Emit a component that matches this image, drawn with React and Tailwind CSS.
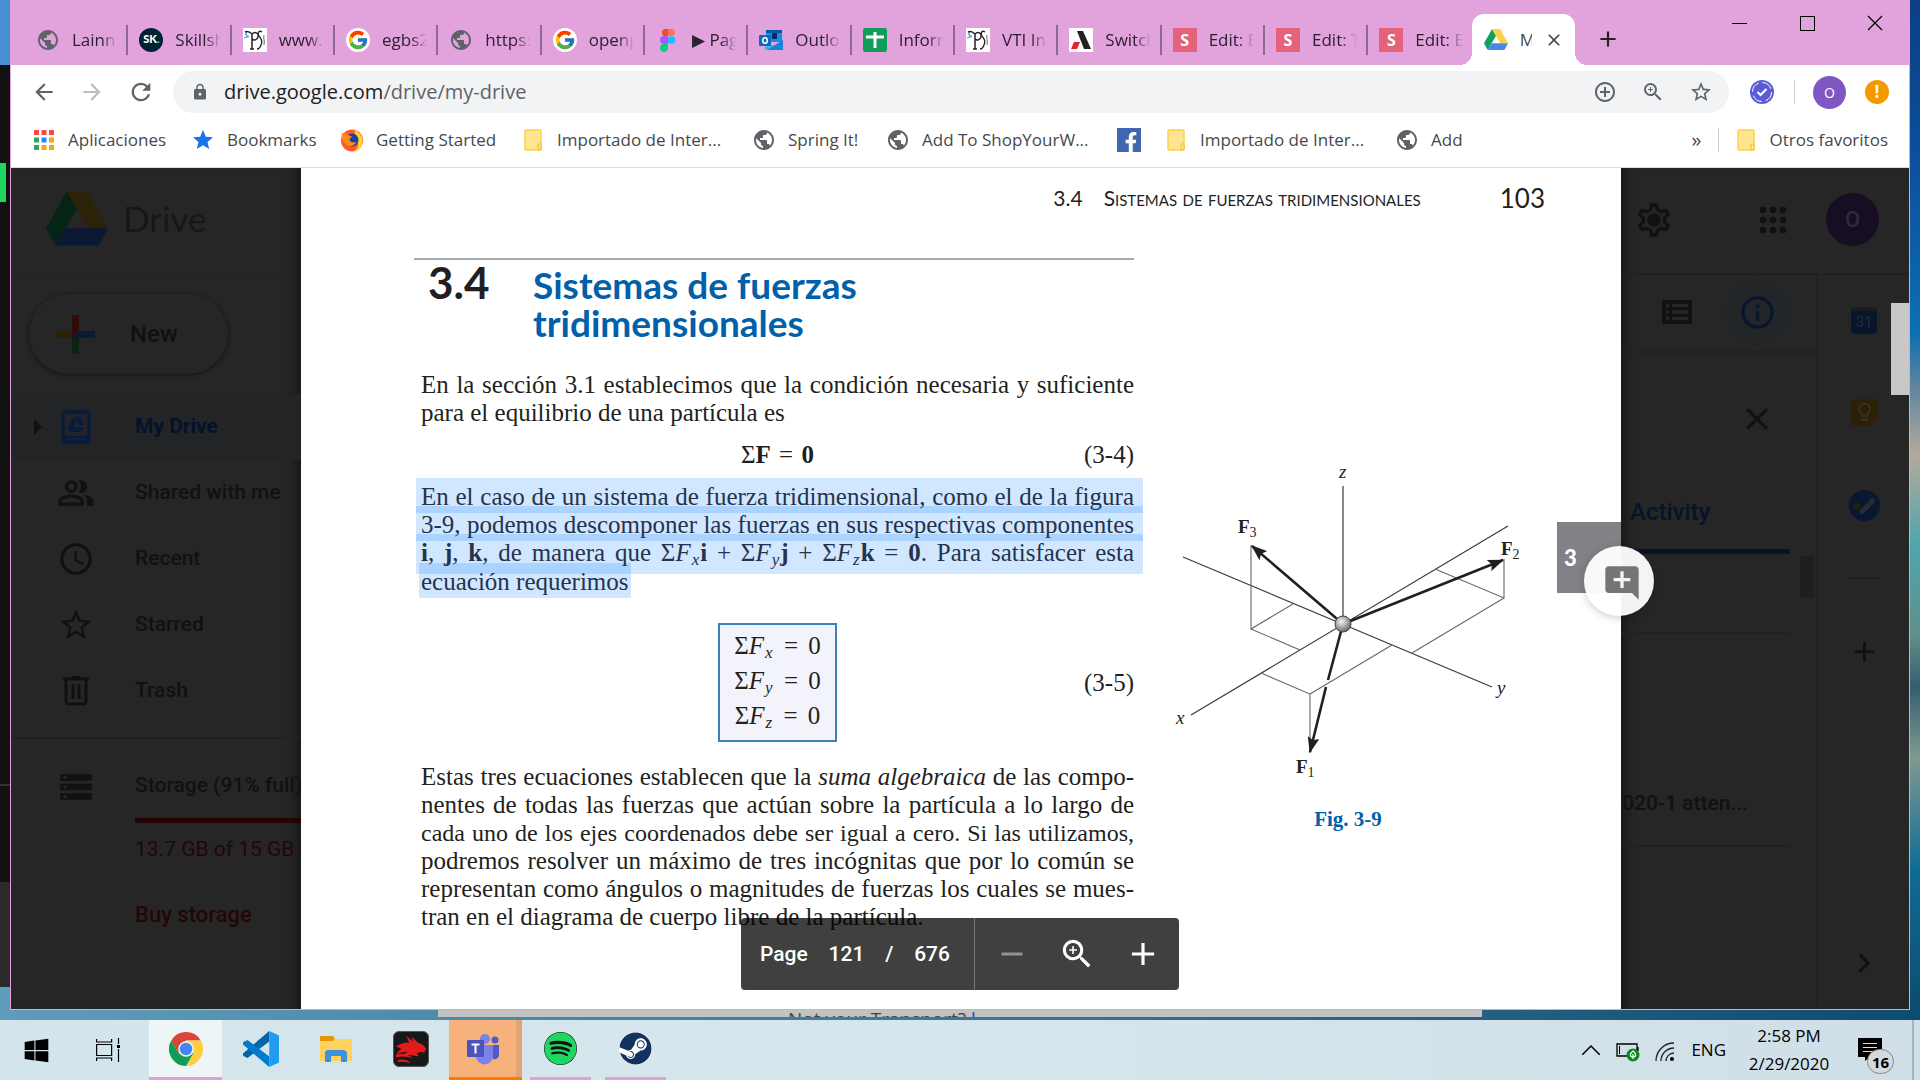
import React from "react";
import {
  MdArrowBack,
  MdArrowForward,
  MdRefresh,
  MdLock,
  MdAddCircleOutline,
  MdZoomIn,
  MdStarBorder,
  MdStar,
  MdClose,
  MdAdd,
  MdRemove,
  MdPublic,
  MdAddComment,
  MdAccessTime,
  MdStorage,
  MdOutlinePeopleAlt,
  MdOutlineSettings,
  MdOutlineInfo,
  MdChevronRight,
} from "react-icons/md";
import { FaWindows, FaSpotify, FaSteam, FaDragon, FaFacebookF } from "react-icons/fa";
import { FcGoogle } from "react-icons/fc";

/* ---------- icons ---------- */

const DriveLogo = ({ className, green = "#11a15e", yellow = "#ffcf44", blue = "#4687f4" }) => (
  <svg viewBox="137 95 187 163" className={className} aria-hidden="true">
    <path d="M200 95L231 148L166 258L137 206Z" fill={green} />
    <path d="M200 95H263L324 206H264Z" fill={yellow} />
    <path d="M198 206H324L296 258H166Z" fill={blue} />
  </svg>
);

const Globe = () => <MdPublic className="size-6 text-[#5f6368]" />;

const Skillshare = () => (
  <span className="flex size-6 items-center justify-center rounded-full bg-[#002333] font-['Lato'] text-[11px] font-black text-white">
    SK<span className="text-[#00ff84]">.</span>
  </span>
);

const PsIcon = () => (
  <svg viewBox="0 0 24 24" className="size-6" aria-hidden="true">
    <rect width="24" height="24" fill="#fff" />
    <path d="M2 6l4 3M1 10l5-2M3 4l1 6" stroke="#5fa8cf" strokeWidth="1.2" />
    <path d="M9 21V6c3-3 7-1 6 3-1 3-4 4-6 2M7 21h4M2 4c2-1 5 0 7 2" stroke="#222" strokeWidth="1.5" fill="none" />
    <path d="M19 4c-3-2-5 1-3 4 2 3 4 5 2 9-1 3-2 4-4 4" stroke="#222" strokeWidth="1.3" fill="none" />
    <path d="M21 7c-1 3 1 6 0 10" stroke="#666" fill="none" />
  </svg>
);

const Google = () => (
  <span className="flex size-6 items-center justify-center rounded-full bg-white">
    <FcGoogle className="size-[22px]" />
  </span>
);

const Figma = () => (
  <svg viewBox="0 0 24 24" className="size-6" aria-hidden="true">
    <path d="M12 1H8a4 4 0 0 0 0 7h4z" fill="#f24e1e" />
    <path d="M12 1h3.500a3.500 3.500 0 0 1 0 7H12z" fill="#ff7262" />
    <path d="M12 8H8a4 4 0 0 0 0 8h4z" fill="#a259ff" />
    <circle cx="15.500" cy="12" r="3.800" fill="#1abcfe" />
    <path d="M12 16H8a4 4 0 1 0 4 4z" fill="#0acf83" />
  </svg>
);

const Outlook = () => (
  <svg viewBox="0 0 24 24" className="size-6" aria-hidden="true">
    <rect x="7" y="2" width="16" height="12" fill="#1490df" />
    <rect x="7" y="2" width="16" height="3" fill="#0358a7" />
    <rect x="13" y="5" width="5" height="6" fill="#0a2767" />
    <path d="M6 13l9 5 9-6v10H6z" fill="#35b8f1" />
    <path d="M24 12v10H8z" fill="#1784d9" />
    <rect x="0" y="7" width="12" height="11" rx="1" fill="#0f6cbd" />
    <ellipse cx="6" cy="12.500" rx="2.300" ry="2.800" stroke="#fff" strokeWidth="1.600" fill="none" />
  </svg>
);

const Sheets = () => (
  <svg viewBox="0 0 24 24" className="size-6" aria-hidden="true">
    <rect width="24" height="24" rx="2" fill="#0f9d58" />
    <path d="M3 9h18M12 4v16" stroke="#fff" strokeWidth="3" />
  </svg>
);

const Adonis = () => (
  <svg viewBox="0 0 24 24" className="size-6" aria-hidden="true">
    <rect width="24" height="24" fill="#fff" />
    <path d="M8 3h6l8 18h-7z" fill="#222" />
    <path d="M5 14h6l-3 7H2z" fill="#e8202a" />
  </svg>
);

const SIcon = () => (
  <span className="flex size-6 items-center justify-center bg-[#e5637a] font-['Open_Sans'] text-[16px] font-bold text-white">
    S
  </span>
);

const DriveTab = () => <DriveLogo className="h-[21px] w-6 shrink-0" />;

const AppsIcon = () => (
  <svg viewBox="0 0 20 20" className="size-5" aria-hidden="true">
    {["#f44", "#f44", "#f44", "#35a163", "#1a8cff", "#f5a70b", "#35a163", "#f5a70b", "#f5a70b"].map((fill, i) => (
      <rect key={i} x={(i % 3) * 7.500} y={Math.floor(i / 3) * 7.500} width="5" height="5" fill={fill} />
    ))}
  </svg>
);

const Firefox = () => (
  <svg viewBox="0 0 24 24" className="size-6" aria-hidden="true">
    <circle cx="12" cy="12.500" r="11" fill="#ff5a24" />
    <path d="M15 0c0 3 6 5 7 10 2 6-2 13-9 13.500 6-3 6-8 4-12-1-3-3-7-2-11.500z" fill="#ffd52e" />
    <circle cx="12" cy="12" r="6.500" fill="#1c3fa0" />
    <path d="M2 5c2 0 4 0 5 2 3 0 4 1 5 2-2 1-3 2-2 4 2 2 4 1 6 1-1 4-6 5-9 3-4-2-6-7-5-12z" fill="#ff8a16" />
  </svg>
);

const Folder = () => (
  <svg viewBox="0 0 18 22" className="h-[22px] w-[18px]" aria-hidden="true">
    <rect x="1" y="1" width="16" height="20" rx="1" fill="#ffe58f" stroke="#fbd24b" strokeWidth="1.500" />
    <path d="M14 21v-6h3v6z" fill="#ffe58f" stroke="#ecc130" />
  </svg>
);

const Facebook = () => (
  <span className="flex size-6 items-end justify-center bg-[#4167b2] pl-1">
    <FaFacebookF className="size-5 text-white" />
  </span>
);

const Chrome = () => (
  <svg viewBox="0 0 48 48" className="size-[34px]" aria-hidden="true">
    <path d="M3.200 12A24 24 0 0 1 44.800 12H24L13.600 30Z" fill="#db4437" />
    <path d="M44.800 12A24 24 0 0 1 24 48L34.400 30L24 12Z" fill="#ffcd40" />
    <path d="M24 48A24 24 0 0 1 3.200 12L13.600 30H34.400Z" fill="#0f9d58" />
    <circle cx="24" cy="24" r="11" fill="#f1f1f1" />
    <circle cx="24" cy="24" r="8.800" fill="#4285f4" />
  </svg>
);

const VsCode = () => (
  <svg viewBox="0 0 24 24" className="size-9" aria-hidden="true">
    <path d="M17.500 0V7L3 18L0 16.500V15Z" fill="#0065a9" />
    <path d="M17.500 24V17L3 6L0 7.500V9Z" fill="#007acc" />
    <path d="M17.500 0L24 3V21L17.500 24Z" fill="#1f9cf0" />
  </svg>
);

const Explorer = () => (
  <svg viewBox="0 0 32 26" className="h-[26px] w-8" aria-hidden="true">
    <path d="M0 0h13l2 3-2 2H0z" fill="#dc9a09" />
    <path d="M0 5h13l2-2h17v22H0z" fill="#ffd25e" />
    <path d="M5 26V16l2-2h17l3 2v10h-6v-6H11v6z" fill="#3b95dd" />
  </svg>
);

const Dragon = () => (
  <span className="flex size-9 items-center justify-center rounded-md border border-[#555] bg-[#17181a]">
    <svg viewBox="0 0 36 36" className="size-9" fill="#e31b1b" aria-hidden="true">
      <path d="M2 15c6-3 9-4 14-4l-3-7 7 6-1-5 6 6c4 1 7 3 9 7l-2 4-4-1-4 2 3 3-7-1c-5-1-8 0-12 1 2-3 5-4 7-5-5 0-9 1-13 3 2-3 4-5 6-6z" />
      <path d="M2 24c6-2 13-1 18 4-5-2-12-3-18-1zM4 30c5-2 10-1 14 3-5-1-9-2-14-1z" />
    </svg>
  </span>
);

const Teams = () => (
  <svg viewBox="0 0 34 32" className="h-8 w-[34px]" aria-hidden="true">
    <circle cx="19" cy="6" r="5" fill="#7b83eb" />
    <circle cx="29" cy="7" r="3.500" fill="#5059c9" />
    <path d="M24 12h9v10c0 3-3 5-6 4z" fill="#5059c9" />
    <path d="M10 12h17v11a8 8 0 0 1-17 0z" fill="#7b83eb" />
    <rect x="1" y="7" width="17" height="17" rx="1" fill="#4b53bc" />
    <path d="M5.500 11.500h8M9.500 11.500v9" stroke="#fff" strokeWidth="2" />
  </svg>
);

const Spotify = () => (
  <span className="flex size-[33px] items-center justify-center rounded-full bg-[#111]">
    <FaSpotify className="size-[33px] text-[#1ed760]" />
  </span>
);

const Steam = () => (
  <span className="flex size-[33px] items-center justify-center rounded-full bg-white">
    <FaSteam className="size-[33px] text-[#12335f]" />
  </span>
);

const TaskView = () => (
  <svg viewBox="0 0 24 24" className="size-6" fill="none" stroke="#000" strokeWidth="1.200" aria-hidden="true">
    <path d="M.6 1v3h15V1M.6 23v-3h15v3M.6 6.500h15v11H.6zM22.500 0v6M22.500 11v13" />
    <rect x="21" y="7" width="3" height="3" fill="#000" stroke="none" />
  </svg>
);

const MyDriveIcon = () => (
  <svg viewBox="0 0 30 34" className="h-[34px] w-[30px]" aria-hidden="true">
    <rect x="2" y="2" width="26" height="30" rx="2" fill="none" stroke="#081a3d" strokeWidth="3.500" />
    <path d="M2 26h26v5H2z" fill="#081a3d" />
    <path d="M5 29h20" stroke="#26292e" />
    <path d="M12.500 7l3 5-6 10-2.500-4zM14 7h5l4 8h-5zM13 17h10l-2.500 5H11z" fill="#081a3d" />
  </svg>
);

const TrashIcon = () => (
  <svg viewBox="0 0 26 30" className="h-[30px] w-[26px]" fill="none" stroke="#0f1011" strokeWidth="3" aria-hidden="true">
    <path d="M0 3h26M9 1h8M3 3v22a3 3 0 0 0 3 3h14a3 3 0 0 0 3-3V3M10 8v15M16 8v15" />
  </svg>
);

const ListIcon = () => (
  <svg viewBox="0 0 30 24" className="h-6 w-[30px]" aria-hidden="true">
    <rect width="30" height="24" fill="#111213" />
    <path d="M4 5.500h3M4 12h3M4 18.500h3M10 5.500h16M10 12h16M10 18.500h16" stroke="#262626" strokeWidth="3" />
  </svg>
);

/* ---------- browser chrome ---------- */

const tabs = [
  { icon: Globe, title: "Lainnya" },
  { icon: Skillshare, title: "Skillshare" },
  { icon: PsIcon, title: "www.vti" },
  { icon: Google, title: "egbs2020" },
  { icon: Globe, title: "https://" },
  { icon: Google, title: "openproject" },
  { icon: Figma, title: "▶ Page" },
  { icon: Outlook, title: "Outlook" },
  { icon: Sheets, title: "Informe" },
  { icon: PsIcon, title: "VTI Inicio" },
  { icon: Adonis, title: "Switch" },
  { icon: SIcon, title: "Edit: E" },
  { icon: SIcon, title: "Edit: T" },
  { icon: SIcon, title: "Edit: E" },
];

const Tab = ({ icon: Icon, title, last }) => (
  <button
    className={`flex h-[30px] min-w-0 items-center gap-3 pl-[11px] pr-[9px] text-left ${last ? "" : "border-r-2 border-[#8f6a8c]"}`}
  >
    <span className="flex size-6 shrink-0 items-center justify-center">
      <Icon />
    </span>
    <span className="min-w-0 flex-1 overflow-hidden whitespace-nowrap [mask-image:linear-gradient(to_right,#000_65%,transparent)]">
      {title}
    </span>
  </button>
);

const TabStrip = () => (
  <div className="flex h-[65px] bg-[#e2a3dc] pl-[14px] text-[17px] text-[#2b2230]">
    <div className="mt-[14px] grid min-w-0 flex-1 grid-cols-15 items-center">
      {tabs.map((tab, i) => (
        <Tab key={i} {...tab} last={i === tabs.length - 1} />
      ))}
      <div className="relative flex h-[51px] min-w-0 items-center gap-3 rounded-t-xl bg-white pl-3 pr-4 text-[#45494d]">
        <span className="absolute -left-3 bottom-0 size-3 bg-[radial-gradient(circle_at_0_0,transparent_12px,#fff_12px)]" />
        <span className="absolute -right-3 bottom-0 size-3 bg-[radial-gradient(circle_at_100%_0,transparent_12px,#fff_12px)]" />
        <DriveTab />
        <span className="w-3 shrink-0 overflow-hidden whitespace-nowrap">Mi unidad</span>
        <button aria-label="Close tab" className="ml-auto">
          <MdClose className="size-5" />
        </button>
      </div>
    </div>
    <div className="flex w-[334px] justify-between">
      <button aria-label="New tab" className="flex h-[78px] items-center pl-5">
        <MdAdd className="size-[26px] text-[#222]" />
      </button>
      <div className="flex h-[46px]">
        <button aria-label="Minimize" className="flex w-[68px] items-center justify-center">
          <span className="h-px w-[15px] bg-black" />
        </button>
        <button aria-label="Maximize" className="flex w-[68px] items-center justify-center">
          <span className="size-[15px] border border-black" />
        </button>
        <button aria-label="Close" className="flex w-[68px] items-center justify-center">
          <svg viewBox="0 0 16 16" className="size-4" stroke="#000" strokeWidth="1.200">
            <path d="M1 1l14 14M15 1L1 15" />
          </svg>
        </button>
      </div>
    </div>
  </div>
);

const Toolbar = () => (
  <div className="flex h-[54px] items-center bg-white pl-5 pr-5 text-[#5f6368]">
    <button aria-label="Back" className="w-12">
      <MdArrowBack className="size-[26px]" />
    </button>
    <button aria-label="Forward" className="w-12 text-[#bcbec0]">
      <MdArrowForward className="size-[26px]" />
    </button>
    <button aria-label="Reload" className="w-[46px]">
      <MdRefresh className="size-[28px]" />
    </button>
    <div className="flex h-[42px] flex-1 items-center rounded-full bg-[#f1f3f4] pl-[18px] pr-4">
      <MdLock className="size-[18px]" />
      <div className="ml-[15px] flex-1 text-[20px]">
        <span className="text-[#202124]">drive.google.com</span>/drive/my-drive
      </div>
      <div className="flex gap-6">
        <MdAddCircleOutline className="size-6" />
        <MdZoomIn className="size-6" />
        <MdStarBorder className="size-6" />
      </div>
    </div>
    <svg viewBox="0 0 24 24" className="ml-[21px] size-6" aria-hidden="true">
      <circle cx="12" cy="12" r="12" fill="#5c5bd6" />
      <circle cx="12" cy="12" r="9.500" fill="none" stroke="#fff" strokeDasharray="11 4" />
      <path d="M7.500 12l3 3 6-6" fill="none" stroke="#fff" strokeWidth="2" />
    </svg>
    <span className="ml-5 mr-[18px] h-6 w-px bg-[#cfd1d4]" />
    <span className="flex size-[33px] items-center justify-center rounded-full bg-[#7e57c2] text-[14px] text-white">O</span>
    <span className="ml-[19px] flex size-6 items-center justify-center rounded-full bg-[#f29900] text-[17px] font-bold text-white">
      !
    </span>
  </div>
);

const bookmarks = [
  { icon: AppsIcon, label: "Aplicaciones", width: "w-[159px]" },
  { icon: () => <MdStar className="size-6 text-[#1a73e8]" />, label: "Bookmarks", width: "w-[149px]" },
  { icon: Firefox, label: "Getting Started", width: "w-[181px]" },
  { icon: Folder, label: "Importado de Inter...", width: "w-[231px]" },
  { icon: Globe, label: "Spring It!", width: "w-[134px]" },
  { icon: Globe, label: "Add To ShopYourW...", width: "w-[231px]" },
  { icon: Facebook, label: "", width: "w-[47px]" },
  { icon: Folder, label: "Importado de Inter...", width: "w-[231px]" },
  { icon: Globe, label: "Add", width: "w-[80px]" },
];

const Bookmark = ({ icon: Icon, label, width }) => (
  <a href="#" className={`flex shrink-0 items-center gap-3 whitespace-nowrap ${width}`}>
    <span className="flex w-6 justify-center">
      <Icon />
    </span>
    {label}
  </a>
);

const BookmarksBar = () => (
  <div className="flex h-[49px] items-center border-b border-[#dadce0] bg-white pb-[6px] pl-[21px] pr-[21px] text-[17px] text-[#45494d]">
    {bookmarks.map((item, i) => (
      <Bookmark key={i} {...item} />
    ))}
    <span className="ml-auto mr-4 text-[20px]">»</span>
    <span className="mr-[15px] h-6 w-px bg-[#cfd1d4]" />
    <Bookmark icon={Folder} label="Otros favoritos" width="" />
  </div>
);

/* ---------- Drive, dimmed behind the viewer ---------- */

const navItems = [
  { icon: MdOutlinePeopleAlt, label: "Shared with me" },
  { icon: MdAccessTime, label: "Recent" },
  { icon: MdStarBorder, label: "Starred" },
  { icon: TrashIcon, label: "Trash" },
];

const Sidebar = () => (
  <aside className="w-[290px] shrink-0 overflow-hidden whitespace-nowrap bg-[#262626] font-['Roboto'] text-[21px] text-[#101112] shadow-[inset_-12px_0_12px_-8px_#161616]">
    <div className="flex h-[107px] items-center gap-[15px] border-b border-[#212121] pb-[5px] pl-[35px]">
      <DriveLogo className="h-[55px] w-[62px]" green="#052416" yellow="#2c220a" blue="#0b1833" />
      <span className="font-['Lato'] text-[35px] text-[#15171a]">Drive</span>
    </div>
    <button className="ml-[18px] mt-[19px] flex h-20 w-[199px] items-center gap-[35px] rounded-full pl-[27px] shadow-[0_1px_4px_#111]">
      <svg viewBox="0 0 39 39" className="size-[39px]" aria-hidden="true">
        <path d="M16 0h7v16l-7 7z" fill="#320c09" />
        <path d="M0 16h16v7H0z" fill="#2c2103" />
        <path d="M16 23h7v16h-7z" fill="#0b2411" />
        <path d="M23 16h16v7H16z" fill="#0b1a38" />
      </svg>
      <span className="text-[24px] font-medium">New</span>
    </button>
    <nav className="mt-5 font-medium">
      <a href="#" className="flex h-[66px] items-center bg-[#222426] pl-[23px] font-bold text-[#04122c]">
        <span className="mr-[19px] border-y-8 border-l-8 border-y-transparent border-l-[#101112]" />
        <MyDriveIcon />
        <span className="ml-11">My Drive</span>
      </a>
      {navItems.map(({ icon: Icon, label }) => (
        <a key={label} href="#" className="flex h-[66px] items-center gap-10 pl-[46px]">
          <span className="flex w-[38px] justify-center">
            {Icon === TrashIcon ? <Icon /> : <Icon className="size-[38px]" />}
          </span>
          {label}
        </a>
      ))}
    </nav>
    <div className="mt-[13px] flex gap-10 border-t-2 border-[#212121] pl-[46px] pt-[29px]">
      <MdStorage className="size-[38px] shrink-0" />
      <div className="flex flex-col">
        <span className="h-[50px] pt-0.5 font-medium">Storage (91% full)</span>
        <span className="h-[5px] w-[220px] bg-[#230303]" />
        <span className="mt-3 leading-[28px] text-[#230606]">13.7 GB of 15 GB used</span>
        <a href="#" className="mt-[38px] text-[22px] font-medium leading-[28px] text-[#230606]">Buy storage</a>
      </div>
    </div>
  </aside>
);

const DetailsPanel = () => (
  <aside className="relative flex w-[288px] shrink-0 flex-col bg-[#262626] font-['Roboto'] text-[21px] text-[#101112] shadow-[inset_12px_0_12px_-8px_#161616]">
    <div className="flex h-[107px] items-center border-b-2 border-[#202122] pb-0.5 pl-[15px]">
      <span className="relative flex size-9 items-center justify-center">
        <MdOutlineSettings className="size-10 shrink-0" />
        <span className="absolute size-3 rounded-full bg-[#101112]" />
      </span>
      <svg viewBox="0 0 28 28" className="ml-[87px] size-7" fill="#101112" aria-hidden="true">
        {[0, 1, 2, 3, 4, 5, 6, 7, 8].map((i) => (
          <circle key={i} cx={4 + (i % 3) * 10} cy={4 + Math.floor(i / 3) * 10} r="3.300" />
        ))}
      </svg>
      <span className="ml-[39px] flex size-[53px] items-center justify-center rounded-full bg-[#180e24] text-[22px] font-medium text-[#332b3b]">
        O
      </span>
    </div>
    <div className="flex flex-1">
      <div className="w-[197px] overflow-hidden border-r-2 border-[#202122]">
        <div className="flex h-[78px] items-center border-b-2 border-[#202122] pb-0.5 pl-[41px]">
          <ListIcon />
          <span className="ml-8 flex size-[66px] items-center justify-center rounded-full bg-[#232629]">
            <MdOutlineInfo className="size-[39px] text-[#07152e]" />
          </span>
        </div>
        <div className="flex h-[130px] items-center justify-end pr-10 pt-0.5">
          <MdClose className="size-[38px]" />
        </div>
        <div className="flex">
          <div className="w-[169px]">
            <div className="flex h-[71px] items-center border-b-[5px] border-[#0a1226] pb-2 pl-[9px] text-[24px] font-medium text-[#07132b]">
              Activity
            </div>
            <div className="h-[80px] border-b-2 border-[#202122]" />
          </div>
          <div className="ml-[10px] mt-[73px] h-[42px] w-[14px] bg-[#1f1f1f]" />
        </div>
        <div className="flex h-[213px] w-[169px] items-end justify-end whitespace-nowrap border-b-2 border-[#202122] pb-[26px] pr-[42px] font-medium">
          2020-1 atten...
        </div>
      </div>
      <div className="flex flex-1 flex-col items-center pl-px pt-[31px]">
        <span className="mt-px flex h-[27px] w-[26px] items-center justify-center rounded-sm border-t-4 border-[#1c1c1e] bg-[#08152e] text-[15px] text-[#242b38]">
          31
        </span>
        <svg viewBox="0 0 27 27" className="mt-[65px] size-[27px]" aria-hidden="true">
          <path d="M2 0h23l2 2v17l-8 8H2l-2-2V2z" fill="#2c2104" />
          <path d="M11 17c0-3-3-4-3-7a5.500 5.500 0 0 1 11 0c0 3-3 4-3 7zM11 19v2h5v-2" fill="none" stroke="#37362f" strokeWidth="1.500" />
        </svg>
        <svg viewBox="0 0 31 31" className="mt-[64px] size-[31px]" aria-hidden="true">
          <circle cx="15.500" cy="15.500" r="15.500" fill="#0a1730" />
          <circle cx="7.500" cy="16" r="3.300" fill="#2c2104" />
          <path d="M13 21.500L23.500 11" stroke="#262b34" strokeWidth="5" strokeLinecap="round" />
        </svg>
        <span className="mt-[56px] h-0.5 w-[33px] bg-[#1f1f1f]" />
        <MdAdd className="mt-[56px] size-[33px]" />
        <MdChevronRight className="mb-[27px] mt-auto size-[38px]" />
      </div>
    </div>
    <div className="absolute right-0 top-[135px] h-[92px] w-[18px] bg-[#c8c8c8]" />
  </aside>
);

/* ---------- PDF page ---------- */

const Sum = ({ axis }) => (
  <>
    Σ<i>F</i>
    <sub className="px-px text-[17px] italic">{axis}</sub>
  </>
);

const Line = ({ children, tight }) => (
  <span className={`block whitespace-nowrap [text-align-last:justify] ${tight ? "text-[24px]" : ""}`}>{children}</span>
);

const Figure = () => (
  <svg viewBox="1170 460 360 320" className="h-[320px] w-[360px]" role="img" aria-label="Fig. 3-9">
    <defs>
      <radialGradient id="ball" cx="40%" cy="35%" r="65%">
        <stop offset="0" stopColor="#f4f4f4" />
        <stop offset="1" stopColor="#6b6b6d" />
      </radialGradient>
      <marker id="arrow" viewBox="0 0 16 12" refX="15" refY="6" markerWidth="16" markerHeight="12" markerUnits="userSpaceOnUse" orient="auto">
        <path d="M0 0L16 6L0 12L3 6Z" fill="#231f20" />
      </marker>
    </defs>
    <g stroke="#3c3a3b" strokeWidth="1.200" fill="none">
      <path d="M1343 486V624M1508 526L1191 715M1183 557L1492 687" />
    </g>
    <g stroke="#666769" strokeWidth="1.100" fill="none">
      <path d="M1251 545V629L1293 604M1251 629L1300 650" />
      <path d="M1504 559V598L1435 569M1504 598L1412 653" />
      <path d="M1310 753V694L1261 673M1310 694L1392 645" />
    </g>
    <g stroke="#231f20" strokeWidth="2.600" fill="none">
      <path d="M1343 624L1252 546" markerEnd="url(#arrow)" />
      <path d="M1343 624L1503 560" markerEnd="url(#arrow)" />
      <path d="M1343 624L1328 680" />
      <path d="M1326 687L1310 752" markerEnd="url(#arrow)" />
    </g>
    <circle cx="1343" cy="624" r="8" fill="url(#ball)" stroke="#444" />
    <g fontFamily="Liberation Serif, serif" fontSize="19" fill="#231f20">
      <g fontStyle="italic">
        <text x="1339" y="478">z</text>
        <text x="1176" y="724">x</text>
        <text x="1497" y="694">y</text>
      </g>
      <g fontWeight="bold">
        <text x="1238" y="533">F<tspan dy="4" fontSize="14" fontWeight="normal">3</tspan></text>
        <text x="1501" y="555">F<tspan dy="4" fontSize="14" fontWeight="normal">2</tspan></text>
        <text x="1296" y="773">F<tspan dy="4" fontSize="14" fontWeight="normal">1</tspan></text>
      </g>
    </g>
  </svg>
);

const Page = () => (
  <main className="flex-1 bg-white text-[#231f20]">
    <div className="flex h-11 items-end justify-end pr-[76px] pt-4 font-['Lato'] leading-[28px]">
      <span className="text-[21px]">3.4</span>
      <span className="ml-[21px] text-[21px] [font-variant:small-caps]">Sistemas de fuerzas tridimensionales</span>
      <span className="ml-[79px] text-[26px]">103</span>
    </div>
    <div className="mt-[46px] flex pl-[113px]">
      <article className="w-[720px] border-t-2 border-[#a7a9ac] font-['Liberation_Serif'] text-[25px] leading-[28px]">
        <h1 className="flex items-baseline pl-[14px] pt-[3px] font-['Lato'] font-bold leading-[38px]">
          <span className="w-[105px] text-[44px]">3.4</span>
          <span className="text-[37px] text-[#0060a9]">
            Sistemas de fuerzas
            <br />
            tridimensionales
          </span>
        </h1>
        <div className="pl-[7px]">
          <p className="mt-[29px]">
            <Line>En la sección 3.1 establecimos que la condición necesaria y suficiente</Line>
            para el equilibrio de una partícula es
          </p>
          <div className="mt-[14px] grid grid-cols-[1fr_auto_1fr]">
            <span className="col-start-2">
              Σ<b>F</b> <span className="px-0.5">=</span> <b>0</b>
            </span>
            <span className="text-right">(3-4)</span>
          </div>
          <p className="-ml-[5px] -mr-[9px] mt-[9px] text-[#25334c]">
            <span className="-mb-[7px] block h-[35px] bg-[rgba(0,122,255,0.18)] pl-[5px] pr-[9px] pt-[5px]">
              <Line>En el caso de un sistema de fuerza tridimensional, como el de la figura</Line>
            </span>
            <span className="-mb-[7px] block h-[35px] bg-[rgba(0,122,255,0.18)] pl-[5px] pr-[9px] pt-[5px]">
              <Line>3-9, podemos descomponer las fuerzas en sus respectivas componentes</Line>
            </span>
            <span className="-mb-[11px] block h-[40px] bg-[rgba(0,122,255,0.18)] pl-[5px] pr-[9px] pt-[5px]">
              <Line>
                <b>i</b>, <b>j</b>, <b>k</b>, de manera que <Sum axis="x" />
                <b>i</b> + <Sum axis="y" />
                <b>j</b> + <Sum axis="z" />
                <b>k</b> = <b>0</b>. Para satisfacer esta
              </Line>
            </span>
            <span className="ml-[3px] block h-[35px] w-fit bg-[rgba(0,122,255,0.18)] pl-0.5 pr-0.5 pt-[5px]">
              ecuación requerimos
            </span>
          </p>
          <div className="mt-[25px] grid grid-cols-[1fr_auto_1fr] items-center">
            <div className="col-start-2 w-[119px] border-2 border-[#3b82bd] bg-[#f3f4fb] pb-[7px] pt-[3px] text-center leading-[35px]">
              {["x", "y", "z"].map((axis) => (
                <div key={axis}>
                  <Sum axis={axis} /> <span className="px-1">=</span> 0
                </div>
              ))}
            </div>
            <span className="text-right">(3-5)</span>
          </div>
          <p className="mt-[21px]">
            <Line>
              Estas tres ecuaciones establecen que la <i>suma algebraica</i> de las compo-
            </Line>
            <Line>nentes de todas las fuerzas que actúan sobre la partícula a lo largo de</Line>
            <Line tight>cada uno de los ejes coordenados debe ser igual a cero. Si las utilizamos,</Line>
            <Line>podremos resolver un máximo de tres incógnitas que por lo común se</Line>
            <Line>representan como ángulos o magnitudes de fuerzas los cuales se mues-</Line>
            tran en el diagrama de cuerpo libre de la partícula.
          </p>
        </div>
      </article>
      <figure className="ml-9 mt-[202px]">
        <Figure />
        <figcaption className="mt-[25px] pr-1 text-center font-['Liberation_Serif'] text-[21px] font-bold leading-[28px] text-[#0060a9]">
          Fig. 3-9
        </figcaption>
      </figure>
      <div className="ml-auto mt-[264px] flex h-[71px] w-[64px] items-center bg-[#808286] pl-[7px] font-['Lato'] text-[22px] font-black text-white">
        3
      </div>
    </div>
  </main>
);

const ViewerBar = () => (
  <div className="absolute bottom-[19px] left-1/2 flex h-[72px] w-[438px] -translate-x-1/2 items-center rounded bg-black/75 font-['Roboto'] text-[21px] font-medium text-white">
    <div className="flex h-full w-[234px] items-center justify-between border-r border-[#777] pl-[19px] pr-6 pt-0.5">
      <span>Page</span>
      <span>121</span>
      <span>/</span>
      <span>676</span>
    </div>
    <div className="flex flex-1 items-center justify-between pl-[19px] pr-[17px]">
      <button aria-label="Zoom out">
        <MdRemove className="size-[36px] text-[#929292]" />
      </button>
      <button aria-label="Fit to page">
        <MdZoomIn className="size-[38px]" />
      </button>
      <button aria-label="Zoom in">
        <MdAdd className="size-[38px]" />
      </button>
    </div>
  </div>
);

const Browser = () => (
  <div className="flex min-w-0 flex-1 flex-col border-x border-b border-[#e2a3dc]">
    <TabStrip />
    <Toolbar />
    <BookmarksBar />
    <div className="relative flex flex-1">
      <Sidebar />
      <Page />
      <DetailsPanel />
      <ViewerBar />
      <button
        aria-label="Add comment"
        className="absolute right-[255px] top-[378px] flex size-[70px] items-center justify-center rounded-full bg-white/95 shadow-[0_2px_8px_rgba(0,0,0,0.2)]"
      >
        <MdAddComment className="ml-[5px] mt-1 size-10 text-[#757575]" />
      </button>
    </div>
  </div>
);

/* ---------- taskbar ---------- */

const pinned = [
  { name: "Chrome", icon: Chrome, tile: "bg-white/60", bar: "w-[73px] bg-[#e2a0da]" },
  { name: "Visual Studio Code", icon: VsCode, tile: "", bar: "" },
  { name: "File Explorer", icon: Explorer, tile: "", bar: "" },
  { name: "Dragon Center", icon: Dragon, tile: "", bar: "" },
  { name: "Teams", icon: Teams, tile: "bg-[#f7b27c] border-r-[6px] border-[#e3a473]", bar: "w-[73px] bg-[#ff7a00]" },
  { name: "Spotify", icon: Spotify, tile: "", bar: "w-[61px] bg-[#e2a0da]" },
  { name: "Steam", icon: Steam, tile: "", bar: "w-[61px] bg-[#e2a0da]" },
];

const Taskbar = () => (
  <footer className="flex h-[60px] bg-linear-to-r from-[#d3e5ec] via-[#d7e6ed] to-[#d0dfe7] text-black">
    <button aria-label="Start" className="flex w-[72px] items-center justify-center">
      <FaWindows className="size-[27px]" />
    </button>
    <button aria-label="Task view" className="flex w-[72px] items-center justify-center">
      <TaskView />
    </button>
    <div className="ml-[5px] flex gap-0.5">
      {pinned.map(({ name, icon: Icon, tile, bar }) => (
        <button key={name} aria-label={name} className="flex w-[73px] flex-col items-center">
          <span className={`flex w-full flex-1 items-center justify-center ${tile}`}>
            <Icon />
          </span>
          <span className={`h-[3px] ${bar}`} />
        </button>
      ))}
    </div>
    <div className="ml-auto flex items-center text-[17px] leading-[28px]">
      <svg viewBox="0 0 18 10" className="h-[10px] w-[18px]" fill="none" stroke="#000" strokeWidth="1.500" aria-hidden="true">
        <path d="M0 10L9 1L18 10" />
      </svg>
      <svg viewBox="0 0 24 20" className="ml-4 mt-1 h-5 w-6" aria-hidden="true">
        <path d="M1 2h20v12H1zM22 5v4" fill="none" stroke="#000" strokeWidth="1.300" />
        <path d="M3 4h1v8H3z" />
        <circle cx="17" cy="13" r="6.500" fill="#0b8a1c" />
        <path d="M17 9c4 3 3 6 0 6s-4-3 0-6zM17 12v5" fill="none" stroke="#fff" strokeWidth="1.200" />
      </svg>
      <svg viewBox="0 0 20 20" className="ml-[15px] mt-1 size-5" fill="none" stroke="#222" strokeWidth="1.300" aria-hidden="true">
        <path d="M1 19A18 18 0 0 1 19 1M6 19A13 13 0 0 1 19 6M11 19a8 8 0 0 1 8-8" />
        <circle cx="17" cy="17" r="2" fill="#000" stroke="none" />
      </svg>
      <span className="ml-4">ENG</span>
      <span className="ml-3 w-[102px] text-center">
        2:58 PM
        <br />
        2/29/2020
      </span>
      <span className="relative ml-[18px] mr-[30px] block size-6">
        <svg viewBox="0 0 24 24" className="size-6" aria-hidden="true">
          <path d="M0 0h24v19H12l-5 4v-4H0z" />
          <path d="M5 5.500h14M5 9.500h14M5 13.500h14" stroke="#d3e1e9" />
        </svg>
        <span className="absolute left-[9px] top-[11px] flex h-[25px] w-[27px] items-center justify-center rounded-full border border-[#888] bg-[#d6d9db] text-[15px] font-bold">
          16
        </span>
      </span>
      <span className="mr-[6px] h-[60px] w-0.5 bg-[#a9b5bc]" />
    </div>
  </footer>
);

/* slivers of the other windows and wallpaper around the browser */
const LeftEdge = () => (
  <div className="flex w-[10px] flex-col bg-[#5f9cb9]">
    <div className="h-[65px] bg-[#4a8ed4]" />
    <div className="h-[98px] bg-[#111]" />
    <div className="h-[39px] border-r-4 border-[#111] bg-[#1ed760]" />
    <div className="flex-1 bg-[#111]" />
    <div className="h-[98px] border-t-2 border-[#333] bg-[#111]" />
    <div className="mb-[23px] h-[105px] bg-[#2a2a2a]" />
  </div>
);

const App = () => (
  <div className="flex min-h-screen flex-col overflow-hidden font-['Open_Sans','Noto_Sans',sans-serif]">
    <div className="flex flex-1">
      <LeftEdge />
      <Browser />
      <div className="w-[10px] bg-[linear-gradient(#0b3f86,#0c4f9c_16%,#0c6fb0_33%,#5c83a0_38%,#b3aa9c_45%,#4fa5ac_54%,#5f8f8a_63%,#355e70_68%,#7f9a90_75%,#0f6c96_86%,#0c4c70)]" />
    </div>
    <div className="flex h-[10px] justify-center bg-linear-to-r from-[#5f9cb9] via-[#3a7898] to-[#0c4c70] pb-[3px]">
      <div className="w-[1044px] overflow-hidden bg-[#c2c2c2] pl-[350px] text-[19px] leading-[18px] text-[#444]">
        Not your Transport? <span className="text-[#3344cc]">l</span>
      </div>
    </div>
    <Taskbar />
  </div>
);

export default App;
